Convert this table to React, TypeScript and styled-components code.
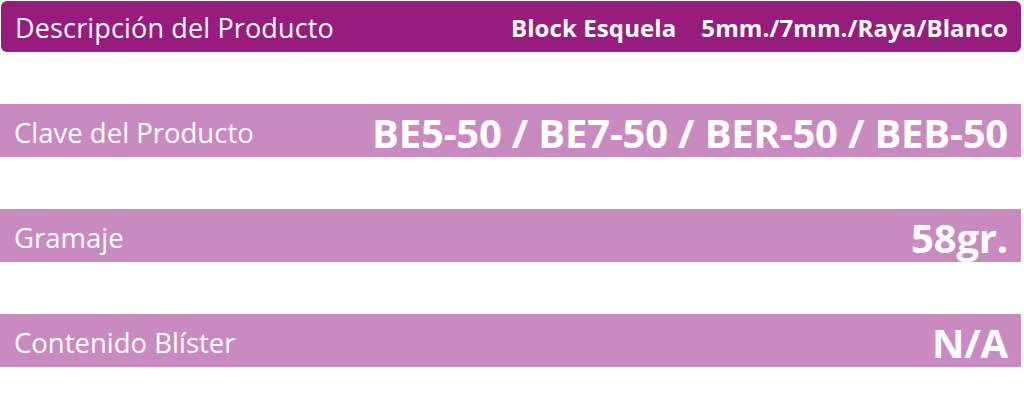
import React from "react";
import styled, { createGlobalStyle } from "styled-components";

const Global = createGlobalStyle`
  html, body { margin: 0; padding: 0; background: #ffffff; }
  body { font-family: "Open Sans", "Noto Sans", sans-serif; }
`;

const Page = styled.div`
  width: 1024px;
  height: 415px;
  display: flex;
  flex-direction: column;
  padding-top: 1px;
  box-sizing: border-box;
`;

const Header = styled.div`
  margin-left: 1px;
  width: 1020px;
  height: 51px;
  background: #981c7e;
  border-radius: 6px;
  display: flex;
  align-items: center;
  justify-content: space-between;
  padding: 0 13px 0 14px;
  box-sizing: border-box;
  color: #ffffff;
`;

const HeaderTitle = styled.span`
  font-size: 27px;
  font-weight: 400;
  letter-spacing: 0.15px;
  padding-top: 1px;
`;

const HeaderValue = styled.span`
  display: flex;
  gap: 25px;
  font-size: 24px;
  font-weight: 700;
  letter-spacing: 0.1px;
  padding-top: 1px;
`;

const Rows = styled.div`
  display: flex;
  flex-direction: column;
  gap: 52px;
  margin-top: 52px;
`;

const Row = styled.div`
  width: 1021px;
  height: 53px;
  background: #c98bbf;
  display: flex;
  align-items: center;
  justify-content: space-between;
  padding: 0 13px 0 14px;
  box-sizing: border-box;
  color: #ffffff;
`;

const Label = styled.span`
  font-size: 27.5px;
  font-weight: 400;
  padding-top: 3px;
`;

const Value = styled.span`
  font-size: 40px;
  font-weight: 700;
  letter-spacing: -0.2px;
  padding-top: 3px;
`;

const rows = [
  { label: "Clave del Producto", value: "BE5-50 / BE7-50 / BER-50 / BEB-50" },
  { label: "Gramaje", value: "58gr." },
  { label: "Contenido Blíster", value: "N/A" },
];

export default function App() {
  return (
    <>
      <Global />
      <Page>
        <Header>
          <HeaderTitle>Descripción del Producto</HeaderTitle>
          <HeaderValue>
            <span>Block Esquela</span>
            <span>5mm./7mm./Raya/Blanco</span>
          </HeaderValue>
        </Header>
        <Rows>
          {rows.map((r) => (
            <Row key={r.label}>
              <Label>{r.label}</Label>
              <Value>{r.value}</Value>
            </Row>
          ))}
        </Rows>
      </Page>
    </>
  );
}
